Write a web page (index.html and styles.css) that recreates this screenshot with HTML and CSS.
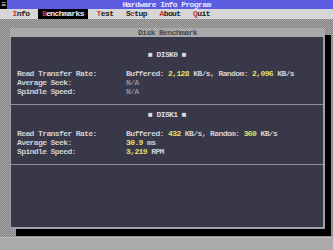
FILE: index.html
```html
<!DOCTYPE html>
<html>
<head>
<meta charset="utf-8">
<link rel="stylesheet" href="styles.css">
</head>
<body>
<div class="screen">
  <div class="titlebar">
    <div class="sysbox">≡</div>
    <div class="title">Hardware Info Program</div>
  </div>
  <div class="menubar">
    <span class="item"><span class="hot">I</span>nfo</span>
    <span class="item active"><span class="hot">B</span>enchmarks</span>
    <span class="item"><span class="hot">T</span>est</span>
    <span class="item">S<span class="hot">e</span>tup</span>
    <span class="item"><span class="hot">A</span>bout</span>
    <span class="item"><span class="hot">Q</span>uit</span>
  </div>
  <div class="desktop">
    <div class="window">
      <div class="wtitle">Disk Benchmark</div>
      <div class="wbody">
        <div class="section">
          <div class="head">■ DISK0 ■</div>
          <div class="rows">
            <div class="row"><span class="label">Read Transfer Rate:</span><span class="val">Buffered: <b>2,128</b> KB/s, Random: <b>2,096</b> KB/s</span></div>
            <div class="row"><span class="label">Average Seek:</span><span class="val dim">N/A</span></div>
            <div class="row"><span class="label">Spindle Speed:</span><span class="val dim">N/A</span></div>
          </div>
        </div>
        <div class="section">
          <div class="head">■ DISK1 ■</div>
          <div class="rows">
            <div class="row"><span class="label">Read Transfer Rate:</span><span class="val">Buffered: <b>432</b> KB/s, Random: <b>360</b> KB/s</span></div>
            <div class="row"><span class="label">Average Seek:</span><span class="val"><b>30.9</b> ms</span></div>
            <div class="row"><span class="label">Spindle Speed:</span><span class="val"><b>3,219</b> RPM</span></div>
          </div>
        </div>
      </div>
    </div>
  </div>
  <div class="statusbar"></div>
</div>
</body>
</html>
```
FILE: styles.css
```css
html, body {
  margin: 0;
  padding: 0;
  background: #a8a8a8;
}
.screen {
  width: 333px;
  height: 250px;
  overflow: hidden;
  display: flex;
  flex-direction: column;
  font-family: "Liberation Mono", "DejaVu Sans Mono", monospace;
  font-size: 8px;
  letter-spacing: -0.6px;
  line-height: 9px;
  font-weight: bold;
}
.titlebar {
  height: 9px;
  background: #5c5ce0;
  display: flex;
  position: relative;
}
.sysbox {
  width: 7px;
  height: 9px;
  background: #000;
  color: #fff;
  text-align: center;
  line-height: 9px;
}
.title {
  flex: 1;
  text-align: center;
  color: #e8e8ff;
  padding-right: 7px;
}
.menubar {
  height: 10px;
  background: #d6d6d6;
  display: flex;
  gap: 4.2px;
  padding-left: 8.4px;
  color: #1c1c1c;
}
.item {
  padding: 0 4.2px;
  line-height: 10px;
  white-space: pre;
}
.item.active {
  background: #000;
  color: #f0f0f0;
}
.hot {
  color: #d03838;
}
.desktop {
  flex: 1;
  background-color: #909090;
  background-image: repeating-conic-gradient(#a6a6a6 0 25%, #848484 0 50%);
  background-size: 2px 2px;
  padding: 9px 8px 0 10px;
}
.window {
  height: 201px;
  display: flex;
  flex-direction: column;
  box-shadow: 6px 7px 0 #000;
}
.wtitle {
  height: 9px;
  background: #a9a9a9;
  color: #4a4a4a;
  text-align: center;
  line-height: 9px;
}
.wbody {
  flex: 1;
  background: #383848;
  border: 1px solid #a0a0a8;
  border-top: none;
  border-right-width: 2px;
  border-bottom-width: 2px;
  padding-top: 8px;
}
.section {
  padding: 5px 0 8px 0;
  border-bottom: 1px solid #8e8e9c;
}
.head {
  text-align: center;
  color: #dcdce0;
}
.rows {
  margin-top: 10px;
  padding-left: 6px;
}
.row {
  display: flex;
  color: #d0d0d4;
}
.label {
  width: 109px;
  flex: none;
}
.val b {
  color: #e2e26a;
}
.val.dim {
  color: #8c8c9c;
}
.statusbar {
  height: 13px;
  background: #ababab;
  border-top: 1px solid #c0c0c0;
  box-sizing: border-box;
}
```
